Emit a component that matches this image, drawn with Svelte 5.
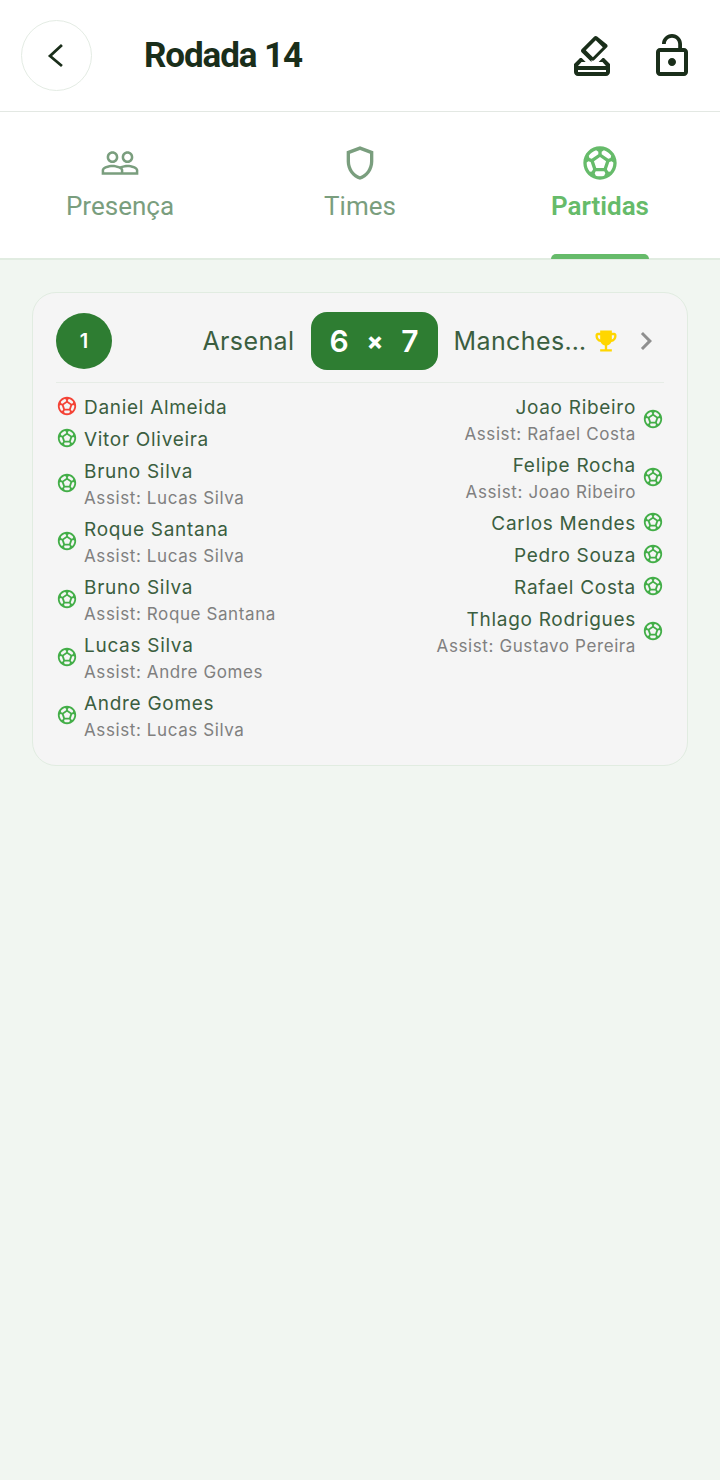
<script>
	const ball = 'M12 2C6.48 2 2 6.48 2 12s4.48 10 10 10 10-4.48 10-10S17.52 2 12 2zm1 3.3l1.35-.95c1.82.56 3.37 1.76 4.38 3.34l-.39 1.34-1.35.46L13 6.7V5.3zm-3.35-.95L11 5.3v1.4L7.01 9.49l-1.35-.46-.39-1.34c1.01-1.57 2.56-2.77 4.38-3.34zM7.08 17.11l-1.14.1C4.73 15.81 4 13.99 4 12c0-.12.01-.23.02-.35l1-.73 1.38.48 1.46 4.34-.78 1.37zm7.42 2.48c-.79.26-1.63.41-2.5.41s-1.71-.15-2.5-.41l-.69-1.49.64-1.1h5.11l.64 1.11-.7 1.48zM14.27 15H9.73l-1.35-4.02L12 8.44l3.63 2.54L14.27 15zm3.79 2.21l-1.14-.1-.79-1.37 1.46-4.34 1.39-.47 1 .73c.01.11.02.22.02.34 0 1.99-.73 3.81-1.94 5.21z';

	const tabs = [
		{ label: 'Presença', icon: 'M16.5 13c-1.2 0-3.07.34-4.5 1-1.43-.67-3.3-1-4.5-1C5.33 13 1 14.08 1 16.25V19h22v-2.75c0-2.17-4.33-3.25-6.5-3.25zm-4 4.5h-10v-1.25c0-.54 2.56-1.75 5-1.75s5 1.21 5 1.75v1.25zm9 0H14v-1.25c0-.46-.2-.86-.52-1.22.88-.3 1.96-.53 3.02-.53 2.44 0 5 1.21 5 1.75v1.25zM7.5 12c1.93 0 3.5-1.57 3.5-3.5S9.43 5 7.5 5 4 6.57 4 8.5 5.57 12 7.5 12zm0-5.5c1.1 0 2 .9 2 2s-.9 2-2 2-2-.9-2-2 .9-2 2-2zm9 5.5c1.93 0 3.5-1.57 3.5-3.5S18.43 5 16.5 5 13 6.57 13 8.5s1.57 3.5 3.5 3.5zm0-5.5c1.1 0 2 .9 2 2s-.9 2-2 2-2-.9-2-2 .9-2 2-2z' },
		{ label: 'Times', icon: 'M12 2 4 5v6.09c0 5.05 3.41 9.76 8 10.91 4.59-1.15 8-5.86 8-10.91V5l-8-3zm6 9.09c0 4-2.55 7.7-6 8.83-3.45-1.13-6-4.82-6-8.83v-4.7l6-2.25 6 2.25v4.7z' },
		{ label: 'Partidas', icon: ball, active: true }
	];

	const homeGoals = [
		{ name: 'Daniel Almeida', own: true },
		{ name: 'Vitor Oliveira' },
		{ name: 'Bruno Silva', assist: 'Lucas Silva' },
		{ name: 'Roque Santana', assist: 'Lucas Silva' },
		{ name: 'Bruno Silva', assist: 'Roque Santana' },
		{ name: 'Lucas Silva', assist: 'Andre Gomes' },
		{ name: 'Andre Gomes', assist: 'Lucas Silva' }
	];

	const awayGoals = [
		{ name: 'Joao Ribeiro', assist: 'Rafael Costa' },
		{ name: 'Felipe Rocha', assist: 'Joao Ribeiro' },
		{ name: 'Carlos Mendes' },
		{ name: 'Pedro Souza' },
		{ name: 'Rafael Costa' },
		{ name: 'Thlago Rodrigues', assist: 'Gustavo Pereira' }
	];
</script>

{#snippet goalRow(goal, away)}
	<div class="goal" class:away>
		<svg class="ball" class:own={goal.own} viewBox="0 0 24 24"><path d={ball} /></svg>
		<div class="goal-text">
			<span class="scorer">{goal.name}</span>
			{#if goal.assist}
				<span class="assist">Assist: {goal.assist}</span>
			{/if}
		</div>
	</div>
{/snippet}

<div class="page">
	<header class="topbar">
		<button class="back" aria-label="Voltar">
			<svg viewBox="0 0 24 24"><polyline points="17.1,2.6 6.9,12 17.1,20.6" /></svg>
		</button>
		<h1>Rodada 14</h1>
		<div class="actions">
			<svg viewBox="0 0 24 24">
				<path d="M18 13h-.68l-2 2h1.91L19 17H5l1.78-2h2.05l-2-2H6l-3 3v4c0 1.1.89 2 1.99 2H19c1.1 0 2-.89 2-2v-4l-3-3zm1 7H5v-1h14v1z" />
				<path transform="translate(0.4 -1)" d="M11.34 15.02c.39.39 1.02.39 1.41 0l6.36-6.36c.39-.39.39-1.02 0-1.41L14.16 3.3c-.38-.4-1.01-.4-1.4-.01L6.39 9.66c-.39.39-.39 1.02 0 1.41l4.95 4.95zm2.12-9.9l3.54 3.54-4.95 4.95-3.54-3.54 4.95-4.95z" />
			</svg>
			<svg viewBox="0 0 24 24"><path d="M12 17c1.1 0 2-.9 2-2s-.9-2-2-2-2 .9-2 2 .9 2 2 2zm6-9h-1V6c0-2.76-2.24-5-5-5S7 3.24 7 6h1.9c0-1.71 1.39-3.1 3.1-3.1 1.71 0 3.1 1.39 3.1 3.1v2H6c-1.1 0-2 .9-2 2v10c0 1.1.9 2 2 2h12c1.1 0 2-.9 2-2V10c0-1.1-.9-2-2-2zm0 12H6V10h12v10z" /></svg>
		</div>
	</header>

	<nav class="tabs">
		{#each tabs as tab}
			<div class="tab" class:active={tab.active}>
				<svg viewBox="0 0 24 24"><path d={tab.icon} /></svg>
				<span>{tab.label}</span>
			</div>
		{/each}
	</nav>

	<main class="content">
		<section class="card">
			<div class="match-head">
				<div class="round">1</div>
				<div class="team home">Arsenal</div>
				<div class="score"><span>6</span><span class="times">×</span><span>7</span></div>
				<div class="team-wrap">
					<div class="team">Manches…</div>
					<svg class="trophy" viewBox="0 0 24 24"><path d="M19 5h-2V3H7v2H5c-1.1 0-2 .9-2 2v1c0 2.55 1.92 4.63 4.39 4.94.63 1.5 1.98 2.63 3.61 2.96V19H7v2h10v-2h-4v-3.1c1.63-.33 2.98-1.46 3.61-2.96C19.08 12.63 21 10.55 21 8V7c0-1.1-.9-2-2-2zM5 8V7h2v3.82C5.84 10.4 5 9.3 5 8zm14 0c0 1.3-.84 2.4-2 2.82V7h2v1z" /></svg>
				</div>
				<svg class="chevron" viewBox="0 0 24 24"><path d="M10 6 8.59 7.41 13.17 12l-4.58 4.59L10 18l6-6z" /></svg>
			</div>
			<div class="goals">
				<div class="goal-col">
					{#each homeGoals as goal}
						{@render goalRow(goal, false)}
					{/each}
				</div>
				<div class="goal-col">
					{#each awayGoals as goal}
						{@render goalRow(goal, true)}
					{/each}
				</div>
			</div>
		</section>
	</main>
</div>

<style>
	:global(body) {
		margin: 0;
		background: #f1f6f1;
		font-family: Inter, "Liberation Sans", sans-serif;
	}

	.page {
		display: flex;
		flex-direction: column;
		min-height: 1480px;
		box-sizing: border-box;
		background: #f1f6f1;
	}

	.topbar {
		display: flex;
		align-items: center;
		height: 112px;
		box-sizing: border-box;
		padding: 0 24px 0 20.5px;
		background: #fff;
		border-bottom: 1px solid #e3e8e3;
	}

	.back {
		width: 71px;
		height: 71px;
		padding: 0;
		display: flex;
		align-items: center;
		justify-content: center;
		background: #fff;
		border: 1.5px solid #e4ece4;
		border-radius: 50%;
	}

	.back svg {
		width: 28px;
		height: 28px;
		fill: none;
		stroke: #1a2e1a;
		stroke-width: 2.4;
	}

	h1 {
		flex: 1;
		margin: 0 0 0 52.5px;
		font-family: Roboto, sans-serif;
		font-size: 35px;
		font-weight: 700;
		letter-spacing: -1.1px;
		color: #1a2e1a;
	}

	.actions {
		display: flex;
		gap: 32px;
	}

	.actions svg {
		width: 48px;
		height: 48px;
		fill: #1a2e1a;
	}

	.tabs {
		display: grid;
		grid-template-columns: repeat(3, 1fr);
		height: 148px;
		box-sizing: border-box;
		background: #fff;
		border-bottom: 2px solid #e1ece1;
	}

	.tab {
		position: relative;
		display: flex;
		flex-direction: column;
		align-items: center;
		padding-top: 31px;
		font-family: Roboto, sans-serif;
		font-size: 26px;
		line-height: 32px;
		color: #7a9e7e;
	}

	.tab svg {
		width: 40px;
		height: 40px;
		fill: currentColor;
		margin-bottom: 7px;
	}

	.tab.active {
		color: #66bb6a;
		font-weight: 600;
	}

	.tab.active::after {
		content: "";
		position: absolute;
		left: 71px;
		right: 71px;
		bottom: -1px;
		height: 5px;
		background: #66bb6a;
		border-radius: 5px 5px 0 0;
	}

	.content {
		padding: 32px;
	}

	.card {
		padding: 19px 23px 22px;
		background: #f5f5f5;
		border: 1px solid #e1ece1;
		border-radius: 24px;
	}

	.match-head {
		display: flex;
		align-items: center;
		gap: 16px;
		padding-bottom: 12px;
		border-bottom: 1px solid #e6ece6;
	}

	.round {
		width: 56px;
		height: 56px;
		flex: none;
		display: flex;
		align-items: center;
		justify-content: center;
		border-radius: 50%;
		background: #2e7d32;
		color: #fff;
		font-size: 20px;
		font-weight: 600;
	}

	.team {
		min-width: 0;
		white-space: nowrap;
		font-size: 25px;
		letter-spacing: 0.4px;
		color: #3b5e40;
	}

	.team.home {
		flex: 1;
		text-align: right;
	}

	.team-wrap {
		flex: 1;
		min-width: 0;
		display: flex;
		align-items: center;
		justify-content: space-between;
	}

	.trophy {
		width: 28px;
		height: 28px;
		flex: none;
		fill: #ffd600;
	}

	.chevron {
		width: 36px;
		height: 36px;
		flex: none;
		margin-left: -8px;
		fill: #8f8f8f;
	}

	.score {
		width: 127px;
		height: 58px;
		flex: none;
		display: flex;
		align-items: center;
		justify-content: center;
		gap: 18px;
		border-radius: 16px;
		background: #2e7d32;
		color: #fff;
		font-size: 30px;
		font-weight: 600;
	}

	.times {
		font-size: 24px;
		font-weight: 800;
	}

	.goals {
		display: flex;
		justify-content: space-between;
		padding-top: 12px;
	}

	.goal-col {
		display: flex;
		flex-direction: column;
		gap: 6px;
	}

	.goal {
		display: flex;
		align-items: center;
		gap: 6px;
	}

	.goal.away {
		flex-direction: row-reverse;
	}

	.goal-text {
		display: flex;
		flex-direction: column;
	}

	.goal.away .goal-text {
		align-items: flex-end;
	}

	.ball {
		width: 22px;
		height: 22px;
		flex: none;
		margin-bottom: 4px;
		fill: #43ae48;
	}

	.ball.own {
		fill: #f44336;
	}

	.scorer {
		font-size: 19px;
		line-height: 26px;
		letter-spacing: 0.7px;
		color: #3b5e40;
	}

	.assist {
		font-size: 17px;
		line-height: 26px;
		letter-spacing: 0.6px;
		color: #808080;
	}
</style>
